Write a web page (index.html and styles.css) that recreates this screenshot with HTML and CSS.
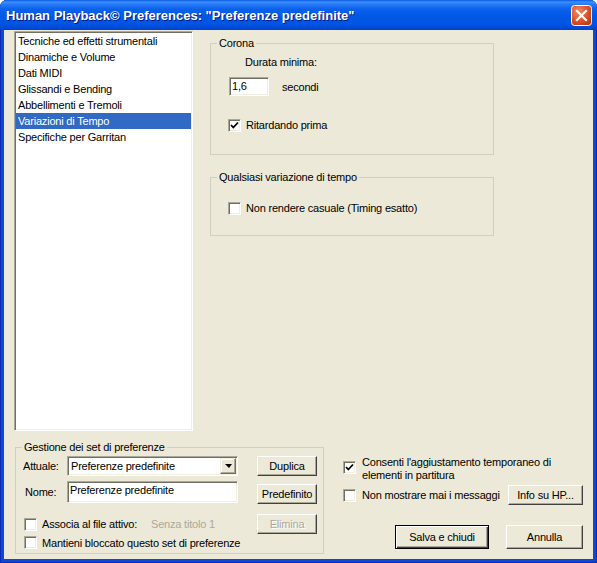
FILE: index.html
```html
<!DOCTYPE html>
<html lang="it">
<head>
    <meta charset="UTF-8">
    <title>Human Playback Preferences</title>
    <link rel="stylesheet" href="styles.css">
</head>
<body>
<div class="window">
    <div class="titlebar">
        <span class="title">Human Playback© Preferences: "Preferenze predefinite"</span>
        <span class="close">
            <svg width="21" height="21" viewBox="0 0 21 21">
                <defs>
                    <radialGradient id="cg" cx="35%" cy="30%" r="80%">
                        <stop offset="0" stop-color="#F08A63"/>
                        <stop offset="0.6" stop-color="#DD5227"/>
                        <stop offset="1" stop-color="#C13A12"/>
                    </radialGradient>
                </defs>
                <rect x="0.5" y="0.5" width="20" height="20" rx="3" fill="url(#cg)" stroke="#fff"/>
                <path d="M6 6 L15 15 M15 6 L6 15" stroke="#fff" stroke-width="2.2" stroke-linecap="square"/>
            </svg>
        </span>
    </div>

    <div class="client">
        <div class="upper">
            <ul class="list">
                <li>Tecniche ed effetti strumentali</li>
                <li>Dinamiche e Volume</li>
                <li>Dati MIDI</li>
                <li>Glissandi e Bending</li>
                <li>Abbellimenti e Tremoli</li>
                <li class="selected">Variazioni di Tempo</li>
                <li>Specifiche per Garritan</li>
            </ul>

            <div class="pages">
                <!-- Corona -->
                <div class="group corona">
                    <div class="group-title">Corona</div>
                    <div class="min-label">Durata minima:</div>
                    <div class="dur-row">
                        <div class="edit dur">1,6</div>
                        <span class="unit">secondi</span>
                    </div>
                    <div class="check-row ritardando">
                        <span class="check"><svg width="11" height="11" viewBox="0 0 11 11"><path d="M2 5 L4.3 7.5 L9 2.5" fill="none" stroke="#000" stroke-width="1.8"/></svg></span>
                        <span>Ritardando prima</span>
                    </div>
                </div>

                <!-- Qualsiasi variazione -->
                <div class="group tempo">
                    <div class="group-title">Qualsiasi variazione di tempo</div>
                    <div class="check-row casuale">
                        <span class="check"></span>
                        <span>Non rendere casuale (Timing esatto)</span>
                    </div>
                </div>
            </div>
        </div>

        <div class="lower">
            <div class="group sets">
                <div class="group-title">Gestione dei set di preferenze</div>
                <div class="set-row row-attuale">
                    <span class="set-label">Attuale:</span>
                    <div class="select">
                        <span class="select-text">Preferenze predefinite</span>
                        <span class="select-arrow"><i></i></span>
                    </div>
                    <span class="btn set-btn">Duplica</span>
                </div>
                <div class="set-row row-nome">
                    <span class="set-label nome">Nome:</span>
                    <div class="edit nome-edit">Preferenze predefinite</div>
                    <span class="btn set-btn">Predefinito</span>
                </div>
                <div class="set-row row-associa">
                    <span class="check"></span>
                    <span class="associa">Associa al file attivo:</span>
                    <span class="grey">Senza titolo 1</span>
                    <span class="btn set-btn disabled">Elimina</span>
                </div>
                <div class="set-row row-blocca">
                    <span class="check"></span>
                    <span>Mantieni bloccato questo set di preferenze</span>
                </div>
            </div>

            <div class="options">
                <div class="opt-row consenti">
                    <span class="check"><svg width="11" height="11" viewBox="0 0 11 11"><path d="M2 5 L4.3 7.5 L9 2.5" fill="none" stroke="#000" stroke-width="1.8"/></svg></span>
                    <span class="opt-text">Consenti l'aggiustamento temporaneo di<br>elementi in partitura</span>
                </div>
                <div class="opt-row messaggi">
                    <span class="check"></span>
                    <span class="opt-text">Non mostrare mai i messaggi</span>
                    <span class="btn info">Info su HP...</span>
                </div>
                <div class="actions">
                    <span class="btn default salva">Salva e chiudi</span>
                    <span class="btn annulla">Annulla</span>
                </div>
            </div>
        </div>
    </div>
</div>
</body>
</html>
```

FILE: styles.css
```css
* { box-sizing: border-box; }
html, body { margin: 0; padding: 0; background: #fff; }
body { font-family: "Liberation Sans", Arial, sans-serif; font-size: 11px; letter-spacing: -0.2px; color: #000; }

/* finestra XP */
.window {
width: 597px;
height: 563px;
display: flex;
flex-direction: column;
background: #0B4AD8;
border-radius: 7px 7px 0 0;
overflow: hidden;
box-shadow: inset 1px 0 #0A2CB0, inset -1px 0 #0A2CB0, inset 0 -1px #0A2CB0;
}

.titlebar {
height: 30px;
flex: none;
display: flex;
align-items: center;
justify-content: space-between;
padding: 0 5px 0 6px;
background: linear-gradient(to bottom, #0A5AE0 0, #3C8FFD 2px, #2A7CF6 4px, #0B62EC 9px, #0058E6 16px, #0055E2 24px, #0049D6 28px, #0040C8 30px);
}
.title {
color: #fff;
font-weight: bold;
font-size: 13px;
letter-spacing: 0;
text-shadow: 1px 1px #0A1883;
white-space: nowrap;
}
.close { width: 21px; height: 21px; display: flex; }

.client {
flex: 1;
margin: 0 4px 4px;
background: #ECE9D8;
}

/* parte superiore: lista + pagina */
.upper {
display: flex;
padding: 1px 0 0 10px;
}
.list {
margin: 0;
padding: 1px;
list-style: none;
width: 179px;
height: 400px;
background: #fff;
border: 1px solid;
border-color: #ACA899 #fff #fff #ACA899;
box-shadow: inset 1px 1px #716F64, inset -1px -1px #F1EFE2;
}
.list li {
height: 16px;
line-height: 16px;
padding-left: 2px;
white-space: nowrap;
}
.list li.selected { background: #316AC5; color: #fff; }

.pages {
margin-left: 17px;
padding-top: 12px;
}

/* group box */
.group { border: 1px solid #D0D0BF; }
.group-title {
display: table;
margin: -7px 0 0 6px;
padding: 0 2px;
line-height: 13px;
background: #ECE9D8;
}

.corona { width: 284px; height: 112px; }
.min-label { margin: 6px 0 0 34px; line-height: 13px; }
.dur-row { display: flex; align-items: center; margin: 8px 0 0 18px; }
.unit { margin-left: 13px; }

.edit {
background: #fff;
border: 1px solid;
border-color: #ACA899 #fff #fff #ACA899;
box-shadow: inset 1px 1px #716F64, inset -1px -1px #F1EFE2;
}
.dur { width: 40px; height: 19px; padding: 2px 0 0 2px; line-height: 13px; }

.check-row { display: flex; align-items: center; line-height: 13px; }
.check {
width: 13px;
height: 13px;
flex: none;
display: flex;
align-items: center;
justify-content: center;
background: #fff;
border: 1px solid;
border-color: #ACA899 #fff #fff #ACA899;
box-shadow: inset 1px 1px #716F64, inset -1px -1px #F1EFE2;
margin-right: 5px;
}
.ritardando { margin: 23px 0 0 17px; }

.tempo { width: 284px; height: 59px; margin-top: 22px; }
.casuale { margin: 18px 0 0 17px; }

/* parte inferiore */
.lower {
display: flex;
margin-top: 16px;
padding-left: 11px;
}
.sets {
width: 309px;
height: 107px;
padding-right: 6px;
}
.set-row { display: flex; align-items: center; white-space: nowrap; }
.set-label { width: 51px; padding-left: 7px; flex: none; }
.set-label.nome { padding-left: 9px; line-height: 22px; }
.row-attuale { margin-top: 2px; height: 20px; }
.select {
display: flex;
width: 171px;
height: 20px;
background: #fff;
border: 1px solid;
border-color: #ACA899 #fff #fff #ACA899;
box-shadow: inset 1px 1px #716F64, inset -1px -1px #F1EFE2;
padding: 1px;
}
.select-text { flex: 1; line-height: 16px; padding-left: 2px; }
.select-arrow {
width: 16px;
height: 16px;
display: flex;
align-items: center;
justify-content: center;
background: #ECE9D8;
border: 1px solid;
border-color: #F1EFE2 #716F64 #716F64 #F1EFE2;
box-shadow: inset -1px -1px #ACA899, inset 1px 1px #fff;
}
.select-arrow i {
width: 0;
height: 0;
border-top: 4px solid #000;
border-left: 4px solid transparent;
border-right: 3px solid transparent;
}

.row-nome { margin-top: 5px; align-items: flex-start; }
.nome-edit { width: 171px; height: 22px; padding: 2px 0 0 2px; line-height: 13px; }
.row-nome .set-btn { margin-top: 3px; }

.row-associa { margin-top: 10px; height: 20px; }
.row-associa .check, .row-blocca .check { margin-left: 8px; }
.associa { width: 109px; }
.grey { color: #ACA899; }
.row-blocca { margin-top: 2px; height: 13px; }

/* bottoni */
.btn {
display: flex;
align-items: center;
justify-content: center;
height: 20px;
background: #ECE9D8;
border: 1px solid;
border-color: #fff #404040 #404040 #fff;
box-shadow: inset -1px -1px #ACA899;
white-space: nowrap;
}
.set-btn { width: 60px; margin-left: auto; }
.btn.disabled { color: #ACA899; text-shadow: 1px 1px #fff; }

.options { margin-left: 19px; width: 240px; }
.opt-row { display: flex; }
.consenti { margin-top: 9px; height: 26px; align-items: flex-start; line-height: 13px; }
.consenti .check { margin-top: 5px; }
.opt-text { margin-left: 1px; }
.messaggi { margin-top: 3px; height: 20px; align-items: center; }
.info { width: 75px; margin-left: auto; }

.actions {
display: flex;
justify-content: flex-end;
gap: 17px;
margin-top: 20px;
}
.actions .btn { height: 24px; }
.salva { width: 94px; }
.annulla { width: 77px; }
.btn.default {
border: 1px solid #000;
box-shadow: inset 1px 1px #fff, inset -1px -1px #404040, inset -2px -2px #ACA899;
}
```
